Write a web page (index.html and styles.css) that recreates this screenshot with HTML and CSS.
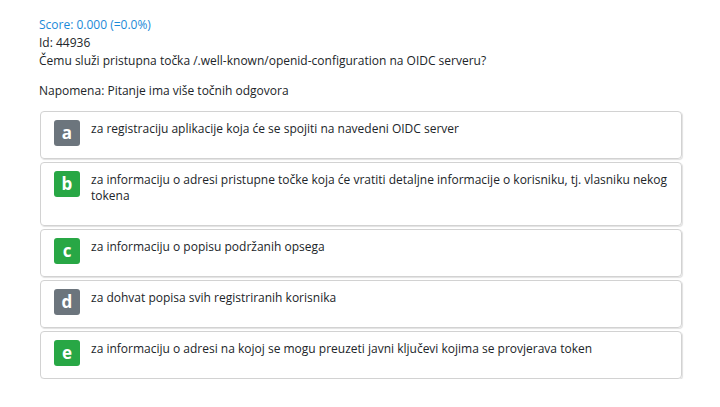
FILE: index.html
```html
<!DOCTYPE html>
<html lang="hr">
<head>
<meta charset="utf-8">
<title>Pitanje</title>
<link rel="stylesheet" href="styles.css">
</head>
<body>
<div class="page">
  <div class="meta">
    <div class="score">Score: 0.000 (=0.0%)</div>
    <div>Id: 44936</div>
    <div>Čemu služi pristupna točka /.well-known/openid-configuration na OIDC serveru?</div>
  </div>
  <p class="note">Napomena: Pitanje ima više točnih odgovora</p>
  <div class="answers">
    <div class="answer"><span class="badge gray">a</span><div class="text">za registraciju aplikacije koja će se spojiti na navedeni OIDC server</div></div>
    <div class="answer"><span class="badge green">b</span><div class="text">za informaciju o adresi pristupne točke koja će vratiti detaljne informacije o korisniku, tj. vlasniku nekog tokena</div></div>
    <div class="answer"><span class="badge green">c</span><div class="text">za informaciju o popisu podržanih opsega</div></div>
    <div class="answer"><span class="badge gray">d</span><div class="text">za dohvat popisa svih registriranih korisnika</div></div>
    <div class="answer"><span class="badge green">e</span><div class="text">za informaciju o adresi na kojoj se mogu preuzeti javni ključevi kojima se provjerava token</div></div>
  </div>
</div>
</body>
</html>
```
FILE: styles.css
```css
html, body {
  margin: 0;
  padding: 0;
  background: #fff;
}
body {
  font-family: "Open Sans", "Noto Sans", sans-serif;
  font-size: 12px;
  color: #212529;
}
.page {
  padding: 16px 38px 0 39px;
}
.meta {
  line-height: 18px;
}
.score {
  color: #1b8ad8;
}
.note {
  margin: 12px 0 11px;
  line-height: 18px;
}
.answers {
  display: flex;
  flex-direction: column;
  gap: 3px;
  margin-left: 1px;
}
.answer {
  display: flex;
  align-items: flex-start;
  gap: 11px;
  border: 1px solid #d2d2d2;
  border-radius: 4px;
  box-shadow: 1px 1px 1px rgba(0, 0, 0, 0.12);
  padding: 8px 12px 8px 13px;
}
.badge {
  flex: none;
  width: 26px;
  height: 26px;
  border-radius: 3px;
  color: #fff;
  font-weight: 700;
  font-size: 17px;
  line-height: 26px;
  text-align: center;
}
.gray { background: #6c757d; }
.green { background: #28a745; }
.text {
  line-height: 16px;
  padding-top: 1px;
  margin-bottom: 13px;
}
```
